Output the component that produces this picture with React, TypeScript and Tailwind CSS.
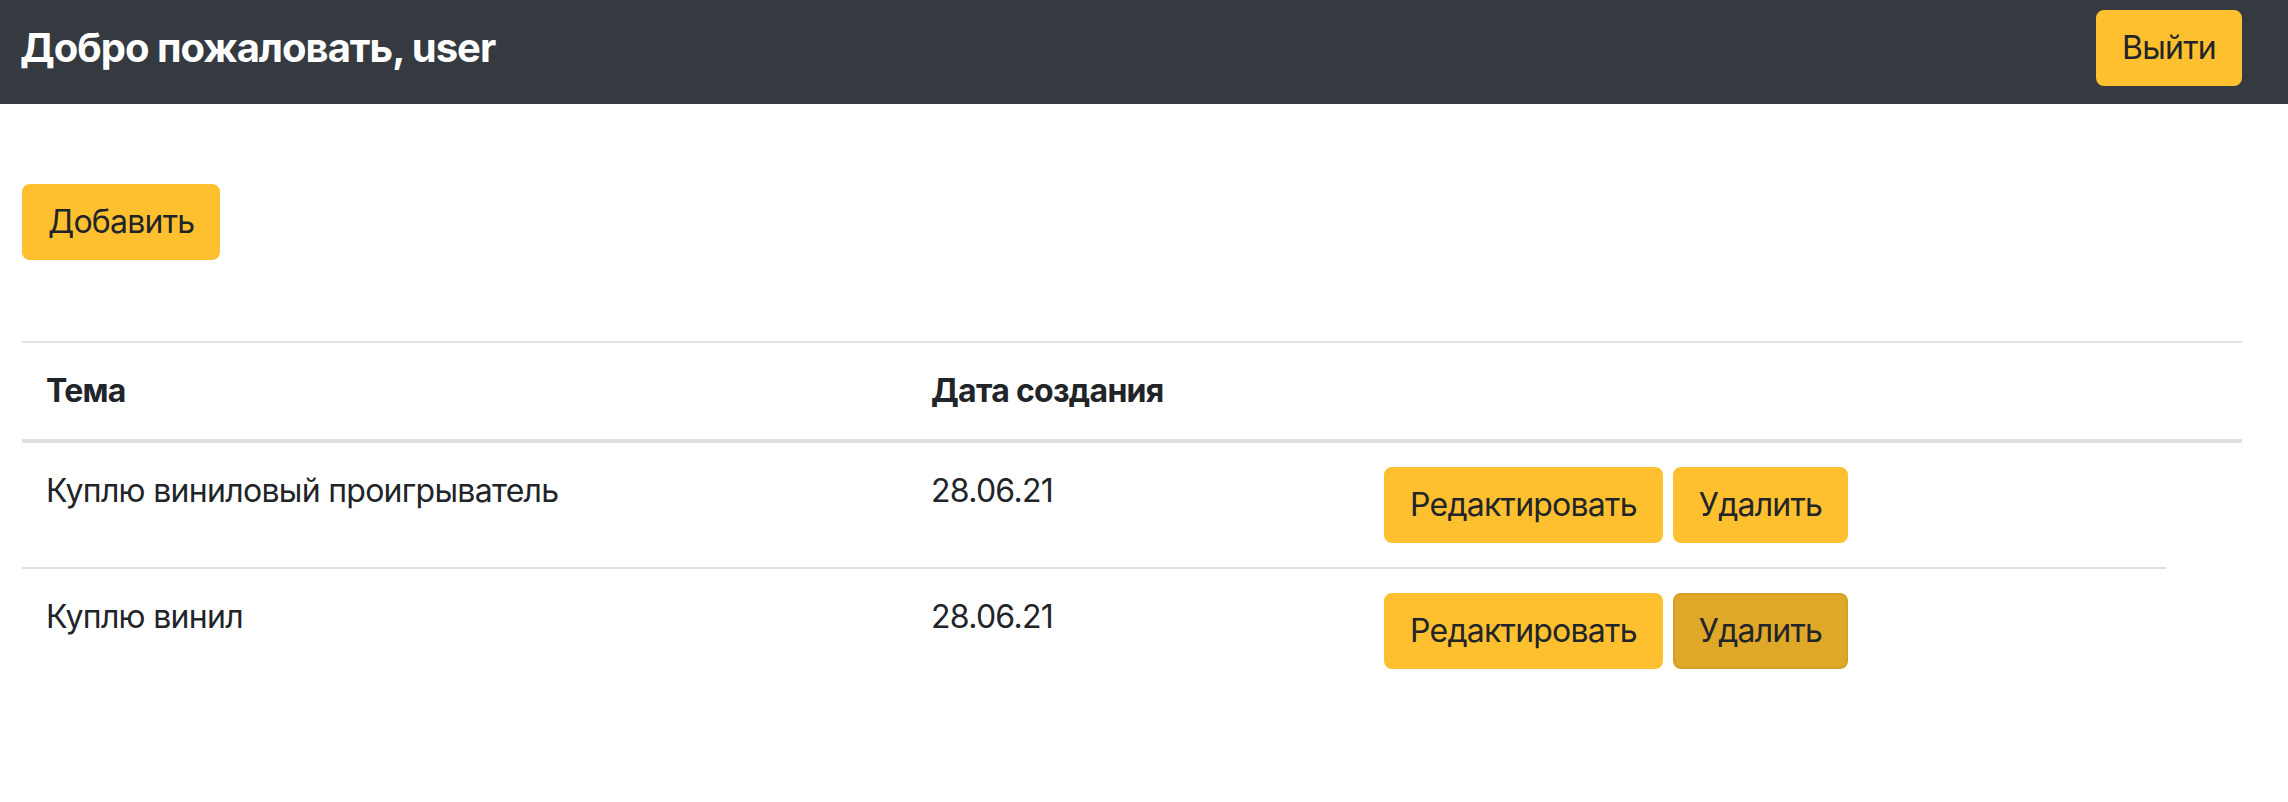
import React from "react";

type Topic = { title: string; date: string; pressed?: boolean };

const topics: Topic[] = [
  { title: "Куплю виниловый проигрыватель", date: "28.06.21" },
  { title: "Куплю винил", date: "28.06.21", pressed: true },
];

const btn =
  "rounded-[8px] border-2 px-[24px] py-[12px] text-[32px] leading-[48px] tracking-[-0.024em] text-[#212529]";

export default function App() {
  return (
    <div className="min-h-screen bg-white font-['Inter',sans-serif] text-[#212529]">
      <header className="flex h-[104px] items-start justify-between bg-[#343a40] pl-5 pr-[46px] pt-[10px]">
        <div className="flex h-[76px] items-center text-[40px] font-bold leading-[60px] tracking-[-0.025em] text-white">
          Добро пожаловать, user
        </div>
        <button className={`${btn} border-[#fec02f] bg-[#fec02f]`}>Выйти</button>
      </header>

      <main className="pl-[22px] pr-[46px] pt-[80px]">
        <button className={`${btn} border-[#fec02f] bg-[#fec02f]`}>Добавить</button>

        <table className="mt-[81px] w-full table-fixed border-collapse text-[32px] leading-[48px] tracking-[-0.022em]">
          <thead>
            <tr>
              <th className="w-[885px] border-t-2 border-b-4 border-[#dee2e6] p-[24px] text-left font-bold">
                Тема
              </th>
              <th className="w-[453px] border-t-2 border-b-4 border-[#dee2e6] p-[24px] text-left font-bold">
                Дата создания
              </th>
              <th className="w-[806px] border-t-2 border-b-4 border-[#dee2e6] p-[24px]"></th>
              <th className="border-t-2 border-b-4 border-[#dee2e6] p-[24px]"></th>
            </tr>
          </thead>
          <tbody>
            {topics.map((t, i) => (
              <tr key={i}>
                <td className="border-t-2 border-[#dee2e6] p-[24px] align-top">{t.title}</td>
                <td className="border-t-2 border-[#dee2e6] p-[24px] align-top">{t.date}</td>
                <td className="border-t-2 border-[#dee2e6] p-[24px] align-top">
                  <div className="flex gap-[10px]">
                    <button className={`${btn} border-[#fec02f] bg-[#fec02f]`}>
                      Редактировать
                    </button>
                    <button
                      className={`${btn} ${
                        t.pressed
                          ? "border-[#d3a024] bg-[#dfa828]"
                          : "border-[#fec02f] bg-[#fec02f]"
                      }`}
                    >
                      Удалить
                    </button>
                  </div>
                </td>
              </tr>
            ))}
          </tbody>
        </table>
      </main>
    </div>
  );
}
